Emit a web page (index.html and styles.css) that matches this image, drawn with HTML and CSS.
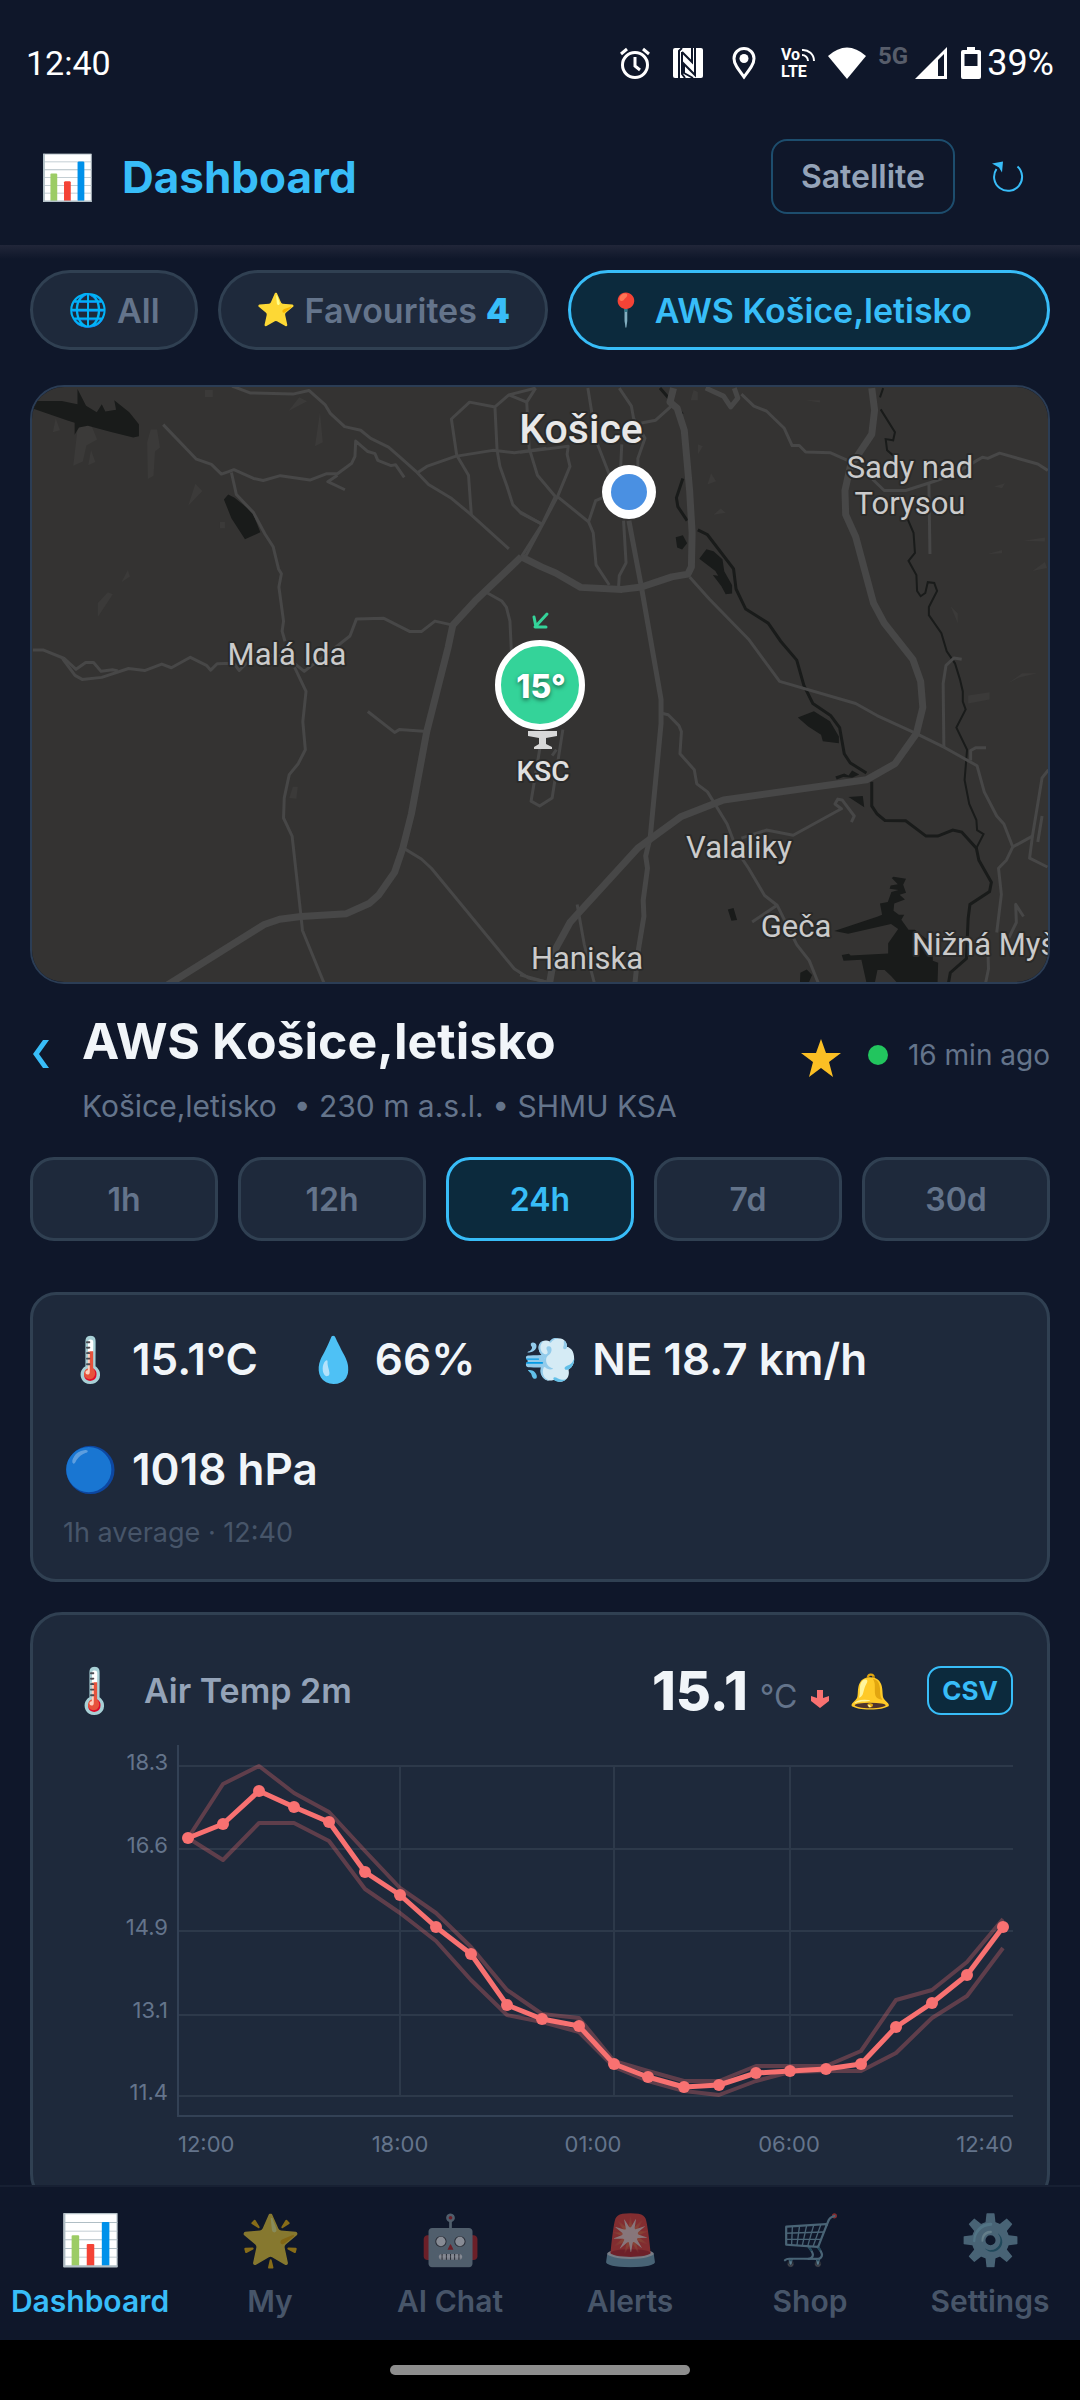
FILE: index.html
```html
<!DOCTYPE html>
<html lang="en">
<head>
    <meta charset="UTF-8">
    <meta name="viewport" content="width=device-width, initial-scale=1.0">
    <title>Dashboard</title>
    <link rel="stylesheet" href="styles.css">
</head>
<body>
    <div class="status-bar">
        <span class="status-time">12:40</span>
        <div class="status-icons">
            <svg class="st-icon st-alarm" viewBox="0 0 32 32"><circle cx="16" cy="18" r="12.500" fill="none" stroke="#fff" stroke-width="3"/><path d="M16 10v9l5 4M2 7l6-5M30 7l-6-5" fill="none" stroke="#fff" stroke-width="3"/></svg>
            <svg class="st-icon st-nfc" viewBox="0 0 32 32"><rect x="1" y="1" width="30" height="30" rx="2" fill="#fff"/><path d="M7 31V4l3-3M10 5l10 10V1M10 5v22l3 4M23 1v27l-11-11v9l9 5" fill="none" stroke="#0f172a" stroke-width="2"/></svg>
            <svg class="st-icon st-pin" viewBox="0 0 32 32"><path d="M16 30C10 22 6 17 6 11.500a10 10 0 0 1 20 0C26 17 22 22 16 30z" fill="none" stroke="#fff" stroke-width="3"/><circle cx="16" cy="11.500" r="4.500" fill="#fff"/></svg>
            <svg class="st-icon st-volte" viewBox="0 0 36 32"><text x="1" y="13" class="volte-text">Vo</text><text x="1" y="30" class="volte-text">LTE</text><path d="M22 8a6 6 0 0 1 6 6M22 3a11 11 0 0 1 12 11" fill="none" stroke="#fff" stroke-width="2"/></svg>
            <svg class="st-icon st-wifi" viewBox="0 0 38 32"><path d="M0 9Q19-8 38 9L19 32z" fill="#fff"/></svg>
            <span class="st-5g">5G</span>
            <svg class="st-icon st-signal" viewBox="0 0 32 32"><path d="M0 32L32 0v32z" fill="#fff"/><path d="M23 13l6-6v22h-6z" fill="#0f172a"/></svg>
            <svg class="st-icon st-battery" viewBox="0 0 20 32"><path d="M6 0h8v3h4a2 2 0 0 1 2 2v25a2 2 0 0 1-2 2H2a2 2 0 0 1-2-2V5a2 2 0 0 1 2-2h4z" fill="#fff"/><path d="M3.500 7h13v12h-13z" fill="#0f172a"/></svg>
            <span class="status-battery">39%</span>
        </div>
    </div>

    <header class="header">
        <span class="header-icon">📊</span>
        <h1>Dashboard</h1>
        <button class="btn-satellite" type="button">Satellite</button>
        <button class="btn-refresh" type="button" aria-label="Refresh">
            <svg viewBox="0 0 32 32"><path d="M25.500 5.500A14 14 0 1 1 4.500 8" fill="none" stroke="#38bdf8" stroke-width="2"/><path d="M0 2.500l11-2-1 11-3-5z" fill="#38bdf8"/></svg>
        </button>
    </header>

    <main class="content">
        <div class="chips">
            <button class="chip" type="button"><span class="chip-icon">🌐</span>All</button>
            <button class="chip" type="button"><span class="chip-icon">⭐</span>Favourites <b>4</b></button>
            <button class="chip chip-wide active" type="button"><span class="chip-icon">📍</span>AWS Košice,letisko</button>
        </div>

        <div class="map">
            <svg viewBox="0 0 1016 595" role="img" aria-label="Map of Košice">
                <rect width="1016" height="595" fill="#343332"/>
                <!-- west half -->
                <g transform="translate(-32 -17) scale(.3571 .4018)">
                    <g class="wood">
                        <path d="M808 102l30-34 22 10zM882 190l14-85 8 75zM527 338l20-55 20 18zM274 615v-35l28-27 14 5zM340 528l18-30 6 16zM205 238l12-90 30-30 25 55-30 15-10 40zM412 180l10-32h18l8 45-14 10-4 60-16 8zM148 155l8-35 12 30zM810 1065l10-28h14l-4 30zM247 237l8-38 12 30z"/>
                        <path d="M574 50h22v17h-22zM616 378h14v16h-14z"/>
                    </g>
                    <path class="water" d="M88 95l10-18 75 0 44 8v-38l24 42 30 16 14-20 10 18 30-4-5-24 42 30 27 30v30l-16 3-62-14-65-15-25 4-12 18v-30l-18-5zM627 322l12-12 18 8 50 36 22 50-43 17-38-52z"/>
                    <g class="road">
                        <path d="M457 136L550 222 592 235 620 259 640 253 655 248 710 270 737 275 785 263 868 274 915 258 945 258 985 232 994 215 996 177 1030 203 1050 208 1058 225 1095 238 1108 236 1132 267"/>
                        <path d="M945 262l-27 16 48 20M648 255L662 310 710 355 742 408 765 440 780 495 788 507 781 540 794 625 790 650 798 675M825 740L857 800 848 875 855 945 835 980 810 1007 796 1065 794 1115 818 1160 843 1360 847 1395 907 1525"/>
                        <path d="M650 40l50 17 120 3 45-9 45 35 15 22 40 33 45 9 28 20 50 22 32 25 48 38 32 30 65 35 50 37 110 88"/>
                        <path d="M92 697h30L180 718 213 745 240 728 262 728 283 750 315 746 330 749"/>
                        <path d="M175 718L210 760 230 770 285 765 360 743 405 748 453 732 480 741 533 715 578 735 590 747 608 731 655 730 670 748 690 730 740 710 800 712 852 750 940 690 980 662 998 620 1075 618 1148 651 1180 651 1218 625 1268 635"/>
                        <path d="M1030 850L1105 902 1118 895 1195 900M1365 555L1405 575 1418 590 1428 625 1432 700M1130 1190L1180 1217 1208 1240 1440 1490 1480 1513 1540 1525"/>
                        <path d="M1170 255L1195 240 1275 215 1380 200 1440 206 1530 195M1320 362L1312 262 1279 212 1264 122 1315 80 1386 92 1425 62 1500 45M1386 92L1392 200 1400 240 1420 290 1436 335 1456 353 1518 384M1425 62l50 18"/>
                        <path d="M1500 45L1475 80 1482 195 1505 262 1555 315 1518 384 1460 465"/>
                    </g>
                    <path class="trunk" d="M470 1530L740 1380 783 1367 843 1360 970 1353 1035 1327 1060 1307 1105 1250 1128 1190 1152 1105 1195 900 1255 690 1268 635 1330 575 1460 465"/>
                </g>
                <!-- east half -->
                <g transform="translate(488 -17) scale(.3571 .4018)">
                    <g class="wood">
                        <path d="M525 285l10-28 14 20zM542 360l20-15 14 10zM478 75l8-25 12 5v20zM498 210v-25l14 5zM1206 588l20 18v24zM1435 500l35-22 6 15zM1366 780l40-25 42 0-50 10zM1255 810l60-8v18l-60 10zM1310 458l40-10v8zM1410 425l60-8v10zM1328 290l30-8-8 12zM800 75l40 0v6z"/>
                    </g>
                    <g class="river">
                        <path d="M392 45L455 110M456 270L438 318 442 340 468 375M498 398L525 410 598 495 605 545 632 595 695 630 730 675 775 722 795 785 820 830 870 860 895 890 908 955 925 978 970 1003M985 1025L985 1085 1000 1105 1022 1121 1080 1122 1137 1160 1170 1160 1212 1145 1237 1150 1278 1190 1285 1220 1320 1275 1315 1298 1260 1330 1255 1365 1250 1465 1205 1500 1200 1525"/>
                        <path class="stream" d="M1017 45L1008 68M1010 98L1050 155 1045 175 1024 172 1028 200 1048 215M1085 370L1102 405 1106 455 1088 475 1110 510 1112 550 1122 563 1135 555 1142 528 1160 530 1168 550 1145 590 1145 610 1180 655 1195 700 1218 730 1232 770 1240 800 1240 825 1248 845 1222 890 1252 945 1245 1020 1258 1080 1278 1120 1280 1145 1298 1155 1278 1190"/>
                    </g>
                    <path class="water" d="M502 470l20-24 20 5 25 20 5 30 22 35v20l-18 2-12-20-24-28 15 2-8-12zM436 416l20-5 12 20-14 16-14-5zM778 865l45-16 45 25 25 38v17l-45-5-5-16-35-20zM883 1012l25-8 12 5 10-12 20 10-20 8-25-2-18 6zM920 1063l40-3 4 28zM582 1343l16-4 10 30-16 2zM785 1500l18-8 15 14-10 20h-24z"/>
                    <path class="water" d="M880 1396l120-35 14-5-6-28 22-4 10-25 20-5-25-3 3-8 20-3-17-16 5-3 35 5-8 15 8 20-18 5 15 12-30 10-2 18 15 10 15 0-8 12 20 25 18 0 30 22 20 5v50l15 5-2 58h-105l-25-25-18-15-20 0-8 35h-22l-15-60-50 2-5-14 20-3 5 4 105-5 0-25 28-36-20-12-120 24z"/>
                    <g class="road">
                        <path d="M120 895l-30 170-35 20-24-12 30-160M90 960l12-15"/>
                        <path d="M0 205L135 190 132 210 140 240 105 315 12 470M0 355l60 28M105 315L192 378 205 405 213 485 250 535M192 378L212 325 230 318"/>
                        <path d="M190 45L200 100 215 180 250 260M278 45L312 90 318 120 350 170 330 220 330 245M285 185l-3 55M290 375L297 480 278 512 276 540M340 132L380 125 430 85"/>
                        <path d="M620 60L655 90 690 102 740 145 762 188 782 188 800 204 870 206 930 230M985 270L1020 300 1080 300 1150 280 1210 262 1280 225 1295 217 1310 220 1343 207 1450 234 1478 250M1145 280L1148 458"/>
                        <path d="M475 515L530 570 640 670 727 775 940 830 1000 860 1110 905 1190 940 1280 985 1300 1050 1335 1110 1355 1130 1380 1187 1435 1160 1448 1090 1462 1015 1480 995"/>
                        <path d="M1187 940L1185 780 1193 735 1215 717 1237 720M1262 972l0-25 15-7h28M1380 1187L1362 1220 1340 1240 1348 1305 1335 1400M1435 1160l-8 55 50 22M1410 1360l-22-30 2 45-25 45M1310 1440l2 50-8 35"/>
                        <path d="M400 855L415 858 445 885 452 900 448 955 488 995 495 1030 525 1050 580 1130 610 1200 640 1240 685 1308 720 1332 775 1430 810 1470 835 1525M720 1332l-70 42M620 1165L690 1145 765 1158 900 1092 882 1080 890 1068 902 1070 936 1110 928 1125M160 1330L180 1430 208 1525"/>
                        <path d="M1450 1175l12-65M0 1505l80 20"/>
                    </g>
                    <path class="road-mid" d="M305 375L340 540 395 820 395 880 365 1160 352 1210 357 1240 345 1320 347 1360 332 1440 322 1525M520 45L570 65 590 92 610 70 600 45"/>
                    <path class="trunk" d="M4 465L60 490 100 505 170 541 285 546 340 540 425 515 470 508 480 490 482 405 475 300 460 150 440 95 420 80 430 45"/>
                    <path class="trunk" d="M82 1530L100 1440 140 1375 330 1190 450 1112 570 1070 970 1020 1050 980 1110 905 1128 840 1122 775 1100 720 1020 630 990 580 940 415 912 360 910 300 925 240 985 160 993 100 985 45"/>
                </g>
                <g class="place">
                    <text x="255" y="278">Malá Ida</text>
                    <text x="878" y="91">Sady nad</text>
                    <text x="878" y="127">Torysou</text>
                    <text x="707" y="471">Valaliky</text>
                    <text x="764" y="550">Geča</text>
                    <text x="555" y="582">Haniska</text>
                    <text x="880" y="568" class="place-edge">Nižná Myš</text>
                </g>
                <text class="city" x="549" y="56">Košice</text>
                <path d="M496 344h29v5l-11 2v6l6 3v2h-18v-2l5-3v-6l-11-2z" fill="#d8d8d8"/>
                <text class="airport" x="511" y="394">KSC</text>
                <circle cx="597" cy="105" r="27" fill="#fff"/>
                <circle cx="597" cy="105" r="18" fill="#4a90e2"/>
                <path d="M515 227l-12 13M502 230l2 10 10 0" fill="none" stroke="#34d399" stroke-width="3" stroke-linecap="round"/>
                <circle cx="508" cy="298" r="42" fill="#34d399" stroke="#fff" stroke-width="6"/>
                <text class="marker-temp" x="509" y="311">15°</text>
            </svg>
        </div>

        <section class="station">
            <button class="btn-back" type="button" aria-label="Back">
                <svg viewBox="0 0 16 28"><path d="M10 0h6L6 14l10 14h-6L0 14z" fill="#38bdf8"/></svg>
            </button>
            <div class="station-name">
                <h2>AWS Košice,letisko</h2>
                <p>Košice,letisko &nbsp;• 230 m a.s.l. • SHMU KSA</p>
            </div>
            <div class="station-state">
                <button class="btn-star" type="button" aria-label="Favourite">
                    <svg viewBox="0 0 40 38"><path d="M20 0l5 14h15L28 23l4 15-12-9-12 9 4-15L0 14h15z" fill="#fbbf24"/></svg>
                </button>
                <span class="dot"></span>
                <span class="ago">16 min ago</span>
            </div>
        </section>

        <div class="ranges">
            <button type="button">1h</button>
            <button type="button">12h</button>
            <button type="button" class="active">24h</button>
            <button type="button">7d</button>
            <button type="button">30d</button>
        </div>

        <section class="card summary">
            <ul class="summary-list">
                <li><span class="emoji">🌡️</span>15.1°C</li>
                <li><span class="emoji">💧</span>66%</li>
                <li><span class="emoji">💨</span>NE 18.7 km/h</li>
                <li><span class="emoji">🔵</span>1018 hPa</li>
            </ul>
            <p class="summary-note">1h average · 12:40</p>
        </section>

        <section class="card sensor">
            <div class="sensor-head">
                <span class="emoji">🌡️</span>
                <h3>Air Temp 2m</h3>
                <span class="sensor-value">15.1</span>
                <span class="sensor-unit">°C</span>
                <svg class="trend" viewBox="0 0 18 18"><path d="M6 0h6v8l6-2v5l-9 7-9-7V6l6 2z" fill="#f87171"/></svg>
                <button class="btn-bell" type="button" aria-label="Alert">🔔</button>
                <button class="btn-csv" type="button">CSV</button>
            </div>
            <svg class="chart" viewBox="0 0 946 420" role="img" aria-label="Air temperature, last 24 hours">
                <g class="grid">
                    <path d="M111 21h835M111 104h835M111 186h835M111 270h835M111 351h835"/>
                    <path d="M333 21v330M547 21v330M723 21v330"/>
                </g>
                <path class="axis" d="M111 0v371h835"/>
                <g class="labels labels-y">
                    <text x="101" y="25">18.3</text>
                    <text x="101" y="108">16.6</text>
                    <text x="101" y="190">14.9</text>
                    <text x="101" y="273">13.1</text>
                    <text x="101" y="355">11.4</text>
                </g>
                <g class="labels">
                    <text x="111" y="407">12:00</text>
                    <text x="333" y="407" class="mid">18:00</text>
                    <text x="526" y="407" class="mid">01:00</text>
                    <text x="722" y="407" class="mid">06:00</text>
                    <text x="946" y="407" class="end">12:40</text>
                </g>
                <polyline class="band" points="121,93 156,39 192,21 227,48 262,67 298,106 333,143 369,168 404,202 440,245 475,269 512,273 547,316 581,326 617,336 652,336 689,321 723,321 759,321 794,306 829,255 865,245 900,217 936,174"/>
                <polyline class="band" points="121,93 156,115 192,78 227,78 262,96 298,144 333,168 369,196 404,235 440,270 475,277 512,287 547,322 581,336 617,346 652,350 689,336 723,327 759,326 794,326 829,308 865,273 900,251 936,203"/>
                <polyline class="avg" points="121,93 156,79 192,46 227,62 262,77 298,127 333,150 369,182 404,209 440,260 475,274 512,281 547,319 581,332 617,342 652,340 689,328 723,326 759,324 794,319 829,282 865,258 900,230 936,182"/>
            </svg>
        </section>
    </main>

    <nav class="tabs">
        <a href="#" class="active"><span>📊</span>Dashboard</a>
        <a href="#"><span>🌟</span>My</a>
        <a href="#"><span>🤖</span>AI Chat</a>
        <a href="#"><span>🚨</span>Alerts</a>
        <a href="#"><span>🛒</span>Shop</a>
        <a href="#"><span>⚙️</span>Settings</a>
    </nav>
    <div class="gesture"><span></span></div>

    <script>
        // a dot on every hourly average
        const avg = document.querySelector('.avg');
        for (const p of avg.points) {
            const dot = document.createElementNS('http://www.w3.org/2000/svg', 'circle');
            dot.setAttribute('cx', p.x);
            dot.setAttribute('cy', p.y);
            dot.setAttribute('r', 6);
            dot.setAttribute('class', 'point');
            avg.parentNode.appendChild(dot);
        }
    </script>
</body>
</html>
```

FILE: styles.css
```css
* {
    margin: 0;
    padding: 0;
    box-sizing: border-box;
}

body {
    display: flex;
    flex-direction: column;
    height: 100vh;
    background: #0f172a;
    color: #f1f5f9;
    font-family: Inter, "Noto Sans", sans-serif;
}

button {
    background: none;
    border: none;
    color: inherit;
    font: inherit;
    cursor: pointer;
}

svg {
    display: block;
}

/* status bar */
.status-bar {
    display: flex;
    justify-content: space-between;
    align-items: center;
    height: 126px;
    padding: 0 26px;
    color: #fff;
    font-family: Roboto, sans-serif;
    font-size: 36px;
    flex-shrink: 0;
}

.status-time {
    font-size: 34px;
}

.status-icons {
    display: flex;
    align-items: center;
}

.st-icon {
    height: 32px;
    overflow: visible;
}

.st-alarm { margin-right: 21px; }
.st-nfc { margin-right: 24px; }
.st-pin { margin-right: 20px; }
.st-volte { margin-right: 12px; }
.st-wifi { margin-right: 12px; }
.st-signal { margin-right: 14px; }
.st-battery { margin-right: 6px; }

.volte-text {
    fill: #fff;
    font-size: 16px;
    font-weight: 700;
}

.st-5g {
    align-self: flex-start;
    margin-right: 7px;
    color: #575d6a;
    font-size: 24px;
    font-weight: 700;
    line-height: 28px;
}

/* header */
.header {
    display: flex;
    align-items: center;
    height: 119px;
    padding: 0 36px 18px 40px;
    flex-shrink: 0;
}

.header-icon {
    width: 54px;
    margin-right: 28px;
    font-size: 44px;
    line-height: 54px;
}

.header h1 {
    flex: 1;
    color: #38bdf8;
    font-size: 44px;
    font-weight: 700;
}

.btn-satellite {
    height: 75px;
    padding: 0 28px;
    border: 2px solid #1d4d6d;
    border-radius: 16px;
    color: #94a3b8;
    font-size: 32px;
    font-weight: 600;
}

.btn-refresh {
    padding: 20px;
    margin-left: 17px;
}

.btn-refresh svg {
    width: 32px;
    height: 32px;
}

/* content */
.content {
    flex: 1;
    min-height: 0;
    padding: 25px 30px;
    overflow: hidden;
    background: linear-gradient(#212639, #0f172a 14px);
}

.chips {
    display: flex;
    gap: 20px;
    margin-bottom: 35px;
}

.chip {
    display: flex;
    align-items: center;
    gap: 9px;
    height: 80px;
    padding: 0 35px;
    border: 3px solid #304052;
    border-radius: 40px;
    background: #1e293b;
    color: #64748b;
    font-size: 34px;
    font-weight: 600;
    white-space: nowrap;
}

.chip b {
    color: #38bdf8;
}

.chip-icon {
    width: 40px;
    font-size: 32px;
    line-height: 40px;
}

.chip-wide {
    flex: 1;
}

.chip.active,
.ranges .active {
    border-color: #38bdf8;
    background: #0c2a3d;
    color: #38bdf8;
}

/* map */
.map {
    overflow: hidden;
    border: 2px solid #2b3d55;
    border-radius: 34px;
    margin-bottom: 27px;
}

.map svg {
    width: 100%;
    height: auto;
}

.map path {
    vector-effect: non-scaling-stroke;
}

.road path,
.road-mid,
.trunk {
    fill: none;
    stroke: #474747;
    stroke-width: 3px;
    stroke-linejoin: round;
}

.road-mid {
    stroke-width: 5px;
}

.trunk {
    stroke-width: 7px;
}

.river path {
    fill: none;
    stroke: #191b1a;
    stroke-width: 3px;
}

.river .stream {
    stroke-width: 2px;
}

.water {
    fill: #191b1a;
}

.wood path {
    fill: #3b3a39;
}

.place,
.city,
.airport,
.marker-temp {
    font-family: Roboto, sans-serif;
    text-anchor: middle;
    paint-order: stroke;
    stroke: #2a2a29;
    stroke-width: 4px;
    stroke-linejoin: round;
}

.place {
    fill: #cbcbcb;
    font-size: 31px;
}

.place-edge {
    text-anchor: start;
}

.city {
    fill: #e8e8e8;
    font-size: 41px;
    font-weight: 500;
}

.airport {
    fill: #e0e0e0;
    font-size: 28px;
    font-weight: 500;
}

.marker-temp {
    fill: #fff;
    stroke: none;
    font-family: Inter, sans-serif;
    font-size: 32px;
    font-weight: 800;
    text-shadow: 0 2px 4px rgba(0, 0, 0, 0.5);
}

/* station title */
.station {
    display: flex;
    align-items: flex-start;
    margin-bottom: 29px;
}

.btn-back {
    display: flex;
    align-items: center;
    width: 52px;
    height: 86px;
    padding-left: 3px;
}

.btn-back svg {
    width: 16px;
    height: 28px;
}

.station-name {
    flex: 1;
}

.station-name h2 {
    margin-bottom: 13px;
    font-size: 50px;
    font-weight: 700;
    line-height: 60px;
}

.station-name p {
    color: #64748b;
    font-size: 30px;
    line-height: 44px;
}

.station-state {
    display: flex;
    align-items: center;
    height: 88px;
    color: #64748b;
    font-size: 28px;
}

.btn-star {
    padding-top: 6px;
}

.btn-star svg {
    width: 40px;
    height: 38px;
}

.dot {
    width: 20px;
    height: 20px;
    margin: 0 20px 0 27px;
    border-radius: 50%;
    background: #22c55e;
}

/* time ranges */
.ranges {
    display: grid;
    grid-template-columns: repeat(5, 1fr);
    gap: 20px;
    margin-bottom: 51px;
}

.ranges button {
    height: 84px;
    border: 3px solid #304052;
    border-radius: 24px;
    background: #1e293b;
    color: #64748b;
    font-size: 32px;
    font-weight: 600;
}

/* cards */
.card {
    border: 3px solid #304052;
    border-radius: 32px;
    background: #1e293b;
}

.emoji {
    width: 52px;
    font-size: 44px;
    line-height: 50px;
}

.summary {
    margin-bottom: 30px;
    padding: 32px 30px 29px;
    border-radius: 26px;
}

.summary-list {
    display: flex;
    flex-wrap: wrap;
    gap: 46px 48px;
    margin-bottom: 15px;
    list-style: none;
}

.summary-list li {
    display: flex;
    align-items: center;
    gap: 17px;
    font-size: 44px;
    font-weight: 600;
    line-height: 64px;
}

.summary-note {
    color: #475569;
    font-size: 27px;
    line-height: 34px;
}

.sensor {
    padding: 40px 34px 38px;
}

.sensor-head {
    display: flex;
    align-items: center;
    height: 70px;
    margin-bottom: 20px;
}

.sensor-head h3 {
    flex: 1;
    margin-left: 25px;
    color: #94a3b8;
    font-size: 34px;
    font-weight: 600;
}

.sensor-value {
    font-size: 54px;
    font-weight: 800;
}

.sensor-unit {
    margin: 12px 14px 0 12px;
    color: #64748b;
    font-size: 32px;
}

.trend {
    width: 18px;
    height: 18px;
    margin: 18px 20px 0 0;
}

.btn-bell {
    width: 42px;
    margin-right: 36px;
    font-size: 34px;
}

.btn-csv {
    height: 49px;
    padding: 0 13px;
    border: 2px solid #38bdf8;
    border-radius: 14px;
    background: #0c2a3d;
    color: #38bdf8;
    font-size: 26px;
    font-weight: 700;
}

/* chart */
.chart {
    width: 100%;
    height: auto;
}

.grid path,
.axis {
    fill: none;
    stroke: #2d394a;
    stroke-width: 2px;
}

.axis {
    stroke: #334155;
}

.labels {
    fill: #64748b;
    font-size: 22px;
}

.labels .mid {
    text-anchor: middle;
}

.labels .end,
.labels-y {
    text-anchor: end;
}

.band,
.avg {
    fill: none;
    stroke: #f87171;
    stroke-width: 5px;
    stroke-linejoin: round;
}

.band {
    stroke-width: 4px;
    opacity: 0.3;
}

.point {
    fill: #f87171;
}

/* bottom tabs */
.tabs {
    display: grid;
    grid-template-columns: repeat(6, 1fr);
    height: 155px;
    flex-shrink: 0;
    border-top: 2px solid #172033;
    background: #0f172a;
}

.tabs a {
    display: flex;
    flex-direction: column;
    align-items: center;
    padding-top: 24px;
    color: #475569;
    font-size: 30px;
    font-weight: 600;
    line-height: 36px;
    text-decoration: none;
}

.tabs span {
    height: 58px;
    margin-bottom: 14px;
    font-size: 49px;
    line-height: 58px;
    opacity: 0.5;
}

.tabs .active {
    color: #38bdf8;
}

.tabs .active span {
    opacity: 1;
}

.gesture {
    display: flex;
    justify-content: center;
    align-items: center;
    height: 60px;
    flex-shrink: 0;
    background: #000;
}

.gesture span {
    width: 300px;
    height: 10px;
    border-radius: 5px;
    background: #8e8e8e;
}
```
